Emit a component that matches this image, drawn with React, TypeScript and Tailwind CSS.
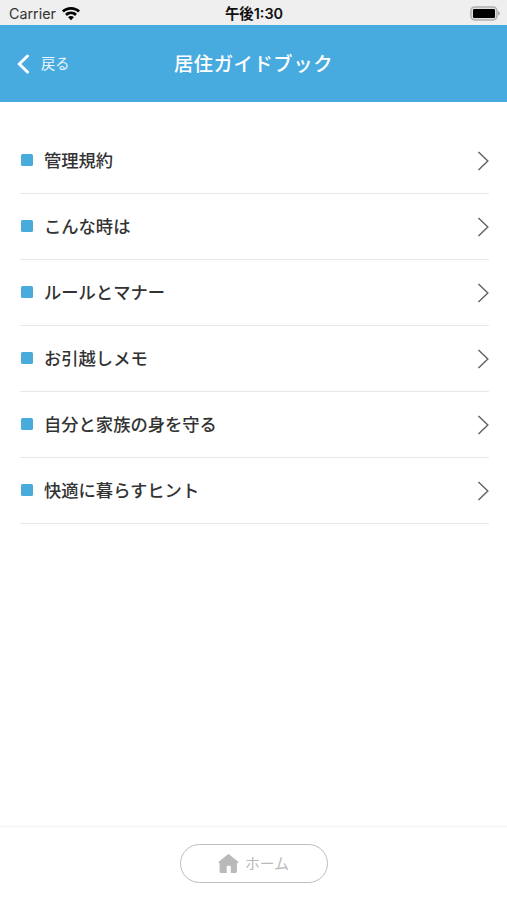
const menuItems = [
  "管理規約",
  "こんな時は",
  "ルールとマナー",
  "お引越しメモ",
  "自分と家族の身を守る",
  "快適に暮らすヒント",
];

export default function App() {
  return (
    <div className="flex h-[900px] w-[507px] flex-col bg-white font-['Noto_Sans_CJK_JP',sans-serif]">
      <StatusBar />
      <Header />
      <main className="flex-1 px-5 pt-[26px]">
        <ul>
          {menuItems.map((item) => (
            <MenuItem key={item} label={item} />
          ))}
        </ul>
      </main>
      <Footer />
    </div>
  );
}

function StatusBar() {
  return (
    <div className="grid h-[25px] grid-cols-3 items-center bg-[#efefef] pt-[2px] pr-[7px] pl-[9px] text-[#111]">
      <div className="flex items-center gap-[6px]">
        <span className="font-[Inter,sans-serif] text-[14.300px] leading-5 text-[#333]">
          Carrier
        </span>
        <svg width="18" height="14" viewBox="0 0 18 14" fill="#000">
          <path d="M9 0C5.500 0 2.300 1.300 0 3.600L1.900 5.600C3.700 3.800 6.200 2.800 9 2.800S14.300 3.800 16.100 5.600L18 3.600C15.700 1.300 12.500 0 9 0Z" />
          <path d="M9 4.600C6.800 4.600 4.700 5.400 3.100 6.900L5 8.900C6.100 7.900 7.500 7.300 9 7.300S11.900 7.900 13 8.900L14.900 6.900C13.300 5.400 11.200 4.600 9 4.600Z" />
          <path d="M9 9.100C7.900 9.100 6.900 9.500 6.100 10.200L9 13.300L11.900 10.200C11.100 9.500 10.100 9.100 9 9.100Z" />
        </svg>
      </div>
      <span className="pr-px text-center font-[Inter,'Noto_Sans_CJK_JP',sans-serif] text-[14.400px] leading-5 font-semibold whitespace-nowrap">
        午後1:30
      </span>
      <svg
        className="justify-self-end"
        width="30"
        height="15"
        viewBox="0 0 30 15"
      >
        <rect
          x="0.900"
          y="0.900"
          width="26"
          height="13"
          rx="3.800"
          fill="#e0e0e0"
          stroke="#b0b0b0"
          strokeWidth="1.500"
        />
        <rect x="3" y="3" width="22" height="9" rx="1.300" fill="#000" />
        <path d="M28 5.300C29.300 5.700 29.800 6.500 29.800 7.400S29.300 9.100 28 9.500Z" fill="#aaa" />
      </svg>
    </div>
  );
}

function Header() {
  return (
    <header className="grid h-[77px] grid-cols-[1fr_auto_1fr] items-center bg-[#48abe0] text-white">
      <button className="flex items-center gap-[11px] pl-[17px]">
        <svg width="13" height="20" viewBox="0 0 13 20" fill="none">
          <path
            d="M10.500 2L2.200 10L10.500 18"
            stroke="currentColor"
            strokeWidth="3"
            strokeLinecap="round"
            strokeLinejoin="round"
          />
        </svg>
        <span className="pb-px text-[14.300px] leading-5 text-white/90">
          戻る
        </span>
      </button>
      <h1 className="pb-[2px] text-[19.300px] leading-7 font-medium tracking-[0.6px]">
        居住ガイドブック
      </h1>
    </header>
  );
}

function MenuItem({ label }: { label: string }) {
  return (
    <li className="flex h-[66px] w-[469px] items-center border-b-[1.500px] border-[#e8e8e8] pb-px">
      <span className="ml-px size-3 rounded-[1.500px] bg-[#48abdc]" />
      <span className="ml-[11px] flex-1 pb-px text-[17.300px] leading-6 font-medium text-[#333]">
        {label}
      </span>
      <svg
        className="mt-[2px]"
        width="12"
        height="20"
        viewBox="0 0 12 20"
        fill="none"
      >
        <path d="M1.500 1L10.800 10L1.500 19" stroke="#666" strokeWidth="1.500" />
      </svg>
    </li>
  );
}

function Footer() {
  return (
    <footer className="flex h-[75px] items-center justify-center border-t-[3px] border-[#fafafa] pb-[2px]">
      <button className="flex h-[39px] w-[148px] items-center justify-center gap-[6px] rounded-full border-[1.500px] border-[#bdbdbd] text-[#b9b9b9]">
        <svg width="21" height="19" viewBox="0 0 20 19" fill="currentColor">
          <path d="M9.200 0.400Q10 -0.200 10.800 0.400L19.500 7.500Q20.400 8.600 19.200 9.200H18.400V17.600Q18.400 19 17 19H12.300V12.700Q12.300 11.700 11.300 11.700H9.200Q8.200 11.700 8.200 12.700V19H2.500Q1.100 19 1.100 17.600V9.200H0.800Q-0.400 8.600 0.500 7.500Z" />
        </svg>
        <span className="pb-px text-[14.800px] leading-5">ホーム</span>
      </button>
    </footer>
  );
}
